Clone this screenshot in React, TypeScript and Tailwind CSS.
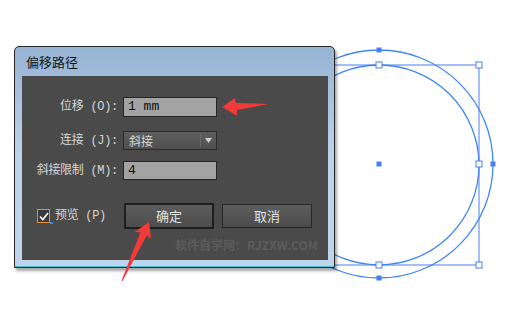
import React from "react";

const cjk = { fontFamily: '"Liberation Mono", "Noto Sans CJK SC", monospace' };
const sans = { fontFamily: '"Noto Sans CJK SC", "Noto Sans", sans-serif' };

/**
 * Artboard: two circles with selection box and handles
 */
function Canvas() {
  const handle = "#4a7ff0";
  const hollow = [
    [379, 65],
    [479, 65],
    [479, 164],
    [479, 265],
    [379, 265],
  ];
  const solid = [
    [379, 50],
    [379, 278],
    [493, 164],
    [379, 164],
  ];
  return (
    <svg className="absolute inset-0" width={523} height={328}>
      <circle cx={379} cy={164} r={114} fill="none" stroke="#3f86f4" strokeWidth={1.3} />
      <circle cx={379} cy={165} r={100} fill="none" stroke="#3f86f4" strokeWidth={1.3} />
      <rect x={279} y={65} width={200} height={200} fill="none" stroke={handle} strokeWidth={1} />
      {hollow.map(([x, y], i) => (
        <rect key={i} x={x - 3} y={y - 3} width={6} height={6} fill="#fff" stroke={handle} strokeWidth={1} />
      ))}
      {solid.map(([x, y], i) => (
        <rect key={i} x={x - 2.5} y={y - 2.5} width={5} height={5} fill={handle} />
      ))}
    </svg>
  );
}

function Arrows() {
  return (
    <svg className="absolute inset-0 pointer-events-none" width={523} height={328}>
      <polygon points="222,107 235,98 236,103 269,104 237,110 237,116" fill="#f23a3a" />
      <polygon
        points="149,222 151,239 146.8,235.3 122.5,281 121.5,280.5 140.4,232.3 134.6,231.9"
        fill="#f23a3a"
      />
    </svg>
  );
}

function Row({ label, children, className = "" }: { label: string; children: React.ReactNode; className?: string }) {
  return (
    <div className={`flex items-center ${className}`}>
      <div className="w-[96px] text-right text-[12px] tracking-[-0.3px] text-[#d6d6d6] leading-none" style={cjk}>
        {label}
      </div>
      <div className="ml-[5px]">{children}</div>
    </div>
  );
}

function Dialog() {
  return (
    <div className="absolute left-[14px] top-[46px] w-[321px] h-[222px] border border-[#262626] rounded-t-[5px] bg-gradient-to-b from-[#97b3d3] via-[#bcd3ea] to-[#bed5ec] shadow-[2px_3px_3px_rgba(0,0,0,0.35)] flex flex-col">
      {/* Title */}
      <div className="h-[29px] flex items-center pl-[11px] text-[13px] text-[#161616]" style={sans}>
        偏移路径
      </div>

      {/* Body */}
      <div className="ml-[7px] w-[306px] h-[184px] bg-[#4a4a4a] flex flex-col pt-[21px]">
        <Row label="位移 (O):">
          <div className="w-[94px] h-[20px] bg-[#a3a3a3] border border-[#262626] flex items-center pl-[4px] text-[13px] text-[#111]" style={cjk}>
            1 mm
          </div>
        </Row>

        <Row label="连接 (J):" className="mt-[14px]">
          <div className="w-[94px] h-[19px] bg-gradient-to-b from-[#5e5e5e] to-[#4f4f4f] border border-[#2a2a2a] flex items-center text-[12px] text-[#d8d8d8]" style={sans}>
            <span className="pl-[5px] flex-1">斜接</span>
            <span className="w-[1px] h-[13px] bg-[#2c2c2c] border-r border-[#6a6a6a]" />
            <span className="w-[15px] flex justify-center">
              <svg width="7" height="5" viewBox="0 0 7 5">
                <polygon points="0,0 7,0 3.5,5" fill="#d0d0d0" />
              </svg>
            </span>
          </div>
        </Row>

        <Row label="斜接限制 (M):" className="mt-[11px]">
          <div className="w-[94px] h-[19px] bg-[#a3a3a3] border border-[#262626] flex items-center pl-[4px] text-[13px] text-[#111]" style={cjk}>
            4
          </div>
        </Row>

        {/* Preview + buttons */}
        <div className="flex items-center mt-[23px] pl-[15px]">
          <div className="w-[87px] flex items-center">
            <div className="relative w-[13px] h-[14px] border border-[#e8902c] bg-[#3a3a3a] flex items-center justify-center">
              <svg width="10" height="9" viewBox="0 0 10 9">
                <path d="M1 4.5 L3.8 7.5 L9 1" fill="none" stroke="#ececec" strokeWidth="1.8" />
              </svg>
              <span className="absolute -right-[4px] -bottom-[2px] w-[3px] h-[2px] bg-[#2f8fe6]" />
            </div>
            <span className="ml-[5px] text-[12px] tracking-[-0.3px] text-[#d6d6d6]" style={cjk}>
              预览 (P)
            </span>
          </div>
          <button className="w-[90px] h-[26px] border-2 border-[#1f1f1f] bg-gradient-to-b from-[#5d5d5d] to-[#4c4c4c] text-[13px] text-[#e2e2e2]" style={sans}>
            确定
          </button>
          <button className="ml-[8px] w-[90px] h-[24px] border border-[#262626] bg-gradient-to-b from-[#5d5d5d] to-[#4c4c4c] text-[13px] text-[#e2e2e2]" style={sans}>
            取消
          </button>
        </div>

        {/* Watermark */}
        <div className="flex justify-end pr-[10px] mt-[10px]">
          <span className="text-[12px] font-bold text-[#5c5c5c] leading-none" style={sans}>
            软件自学网：RJZXW.COM
          </span>
        </div>
      </div>

      <div className="flex-1 border-b border-[#45c4de]" />
    </div>
  );
}

export default function App() {
  return (
    <div className="relative w-[523px] h-[328px] bg-white overflow-hidden">
      <Canvas />
      <Dialog />
      <Arrows />
    </div>
  );
}
